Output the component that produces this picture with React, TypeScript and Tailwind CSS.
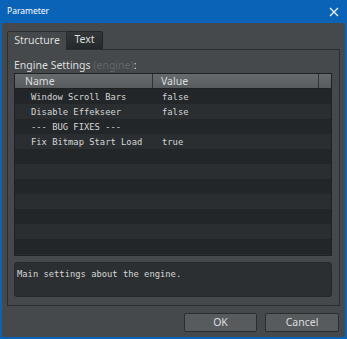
import React from "react";

const rows: [string, string][] = [
  ["Window Scroll Bars", "false"],
  ["Disable Effekseer", "false"],
  ["--- BUG FIXES ---", ""],
  ["Fix Bitmap Start Load", "true"],
  ["", ""],
  ["", ""],
  ["", ""],
  ["", ""],
  ["", ""],
  ["", ""],
  ["", ""],
  ["", ""],
];

const ui = { fontFamily: '"Noto Sans", "DejaVu Sans", sans-serif' };
const mono = { fontFamily: '"DejaVu Sans Mono", "Liberation Mono", monospace' };

export default function App() {
  return (
    <div className="w-[347px] h-[339px] bg-[#0a63b6] flex flex-col px-[2px] pb-[2px] overflow-hidden" style={ui}>
      <div className="h-[23px] flex items-center justify-between pl-[5px] pr-[6px] shrink-0">
        <span className="text-white text-[8.5px]">Parameter</span>
        <svg width="10" height="10" viewBox="0 0 10 10">
          <path d="M1 1 L9 9 M9 1 L1 9" stroke="#e8eef6" strokeWidth="1.4" />
        </svg>
      </div>
      <div className="flex-1 bg-[#45494b] flex flex-col px-[5px] pt-[7px]">
        <div className="flex items-end h-[19px]">
          <div className="h-[19px] w-[60px] bg-[#45494b] border border-b-0 border-[#2b2e30] rounded-t-[2px] flex items-center justify-center text-[10.5px] text-[#dcdedf] relative z-10 -mb-px pb-px">
            Structure
          </div>
          <div className="h-[18px] w-[36px] bg-gradient-to-b from-[#33373a] to-[#26292b] border border-[#232628] border-l-0 rounded-tr-[2px] flex items-center justify-center text-[10.5px] text-[#dcdedf]">
            Text
          </div>
        </div>
        <div className="h-[257px] border border-[#2b2e30] bg-[#45494b] flex flex-col pl-[6px] pr-[7px] pt-[7px] pb-[8px]">
          <div className="h-[16px] flex items-center text-[10.5px] text-[#dcdedf] leading-none">
            Engine Settings&nbsp;<span className="text-[#60666a]">(engine)</span>:
          </div>
          <div className="h-[183px] border border-[#1e2022] bg-[#232628] flex flex-col overflow-hidden">
            <div className="h-[15px] shrink-0 flex bg-gradient-to-b from-[#666b6d] to-[#575b5e] border-b border-[#1e2022] text-[10.5px] text-[#dcdedf] leading-none">
              <div className="w-[138px] border-r border-[#2e3133] flex items-center pl-[10px]">Name</div>
              <div className="w-[166px] border-r border-[#2e3133] flex items-center pl-[8px]">Value</div>
              <div className="flex-1" />
            </div>
            {rows.map((r, i) => (
              <div
                key={i}
                className={
                  "h-[15px] shrink-0 flex items-center text-[8.8px] text-[#d4d6d7] leading-none " +
                  (i % 2 === 0 ? "bg-[#232628]" : "bg-[#2a2e30]")
                }
                style={mono}
              >
                <div className="w-[138px] pl-[16px] pt-[2px] whitespace-nowrap">{r[0]}</div>
                <div className="pl-[9px] pt-[2px]">{r[1]}</div>
              </div>
            ))}
          </div>
          <div className="mt-[6px] h-[35px] border border-[#26292b] rounded-[3px] bg-[#2c2f31] px-[2px] pt-[7px] text-[8.8px] text-[#d4d6d7] leading-none" style={mono}>
            Main settings about the engine.
          </div>
        </div>
        <div className="flex justify-end gap-[8px] mt-[7px] pr-[1px]">
          <button className="w-[73px] h-[19px] bg-[#575b5e] border border-[#2a2d2f] rounded-[2px] text-[10.5px] text-[#dcdedf] leading-none">
            OK
          </button>
          <button className="w-[74px] h-[19px] bg-[#575b5e] border border-[#2a2d2f] rounded-[2px] text-[10.5px] text-[#dcdedf] leading-none">
            Cancel
          </button>
        </div>
      </div>
    </div>
  );
}
